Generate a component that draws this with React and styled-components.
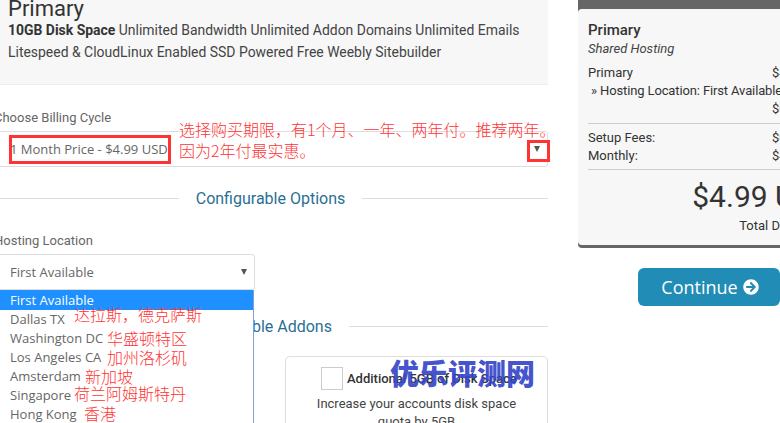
import React from 'react';
import styled, { createGlobalStyle } from 'styled-components';
import { FaArrowCircleRight } from 'react-icons/fa';

const GlobalStyle = createGlobalStyle`
  html, body {
    margin: 0;
    padding: 0;
    background: #fff;
    overflow: hidden;
  }
  * {
    box-sizing: border-box;
  }
`;

const Page = styled.div`
  position: relative;
  width: 780px;
  height: 423px;
  overflow: hidden;
  display: flex;
  align-items: flex-start;
  font-family: Roboto, "Liberation Sans", sans-serif;
  color: #333;
`;

const Main = styled.div`
  position: relative;
  flex: none;
  width: 568px;
  margin-left: -20px;
`;

const ProductHeader = styled.div`
  height: 85px;
  padding: 0 0 0 28px;
  background: #f7f7f7;
  border-bottom: 1px solid #eee;
`;

const ProductName = styled.h1`
  margin: 0;
  height: 19px;
  font-size: 22px;
  line-height: 17px;
  font-weight: 400;
  color: #333;
`;

const Features = styled.p`
  margin: 0;
  font-size: 13.95px;
  line-height: 22px;
  color: #444;

  strong {
    font-weight: 700;
    color: #333;
  }
`;

const Field = styled.div`
  padding-top: ${props => props.$top}px;
`;

const FieldLabel = styled.div`
  padding-left: 14px;
  font-size: 13px;
  line-height: 18px;
  color: #666;
  margin-bottom: 4px;
`;

const SelectBox = styled.div`
  display: flex;
  align-items: center;
  justify-content: space-between;
  width: ${props => props.$width}px;
  height: 36px;
  padding: 0 5px 0 29px;
  background: #fff;
  border: 1px solid #ddd;
  border-radius: 3px;
  font-family: "Open Sans", sans-serif;
  font-size: 13px;
  color: #666;
`;

const Caret = styled.span`
  width: 0;
  height: 0;
  margin-right: 2px;
  border-left: 3.5px solid transparent;
  border-right: 3.5px solid transparent;
  border-top: 6px solid #555;
`;

const Divider = styled.div`
  display: flex;
  align-items: center;
  gap: 17px;
  height: 24px;
  margin: ${props => props.$top}px 0 0 13px;
  font-size: 16px;
  color: #2a6f93;
  white-space: nowrap;

  &::before,
  &::after {
    content: '';
    flex: 1;
    height: 1px;
    background: #ddd;
  }
`;

const AddonRow = styled.div`
  display: flex;
  justify-content: flex-end;
  margin-top: 18px;
`;

const AddonCard = styled.div`
  width: 263px;
  height: 120px;
  padding: 10px 12px;
  border: 1px solid #ddd;
  border-radius: 5px;
  text-align: center;
`;

const AddonHead = styled.div`
  display: flex;
  align-items: center;
  gap: 4px;
  margin-left: 23px;
  font-size: 13px;
  font-weight: 500;
  white-space: nowrap;
  color: #333;
`;

const Checkbox = styled.span`
  flex: none;
  width: 22px;
  height: 23px;
  background: #fff;
  border: 1px solid #ccc;
`;

const AddonText = styled.div`
  margin-top: 5px;
  padding: 0 18px;
  font-size: 13px;
  line-height: 18px;
  color: #444;
`;

const Dropdown = styled.ul`
  position: absolute;
  left: 20px;
  top: 290px;
  width: 254px;
  height: 140px;
  margin: 0;
  padding: 0;
  list-style: none;
  background: #fff;
  border: 1px solid #7f9fd8;
  border-left: none;
  border-top: none;
  font-family: "Open Sans", sans-serif;
  font-size: 13px;
`;

const DropdownItem = styled.li`
  height: ${props => (props.$active ? 20 : 19)}px;
  padding-left: 10px;
  line-height: ${props => (props.$active ? 20 : 19)}px;
  background: ${props => (props.$active ? '#1e90ff' : '#fff')};
  color: ${props => (props.$active ? '#fff' : '#666')};
`;

const Sidebar = styled.aside`
  flex: none;
  width: 264px;
  margin-left: 30px;
`;

const SummaryFrame = styled.div`
  height: 248px;
  padding: 9px 0 3px;
  background: #666;
  border-radius: 0 0 4px 4px;
`;

const Summary = styled.div`
  height: 100%;
  padding: 11px 10px 0;
  background: #f7f7f7;
  border-radius: 4px;
  font-size: 13px;
  line-height: 18px;
  color: #333;
`;

const SummaryTitle = styled.div`
  font-size: 15px;
  font-weight: 500;
  line-height: 20px;
`;

const SummaryGroup = styled.div`
  font-style: italic;
  line-height: 18px;
  margin-bottom: 6px;
  color: #444;
`;

const SummaryRow = styled.div`
  display: flex;
  justify-content: ${props => (props.$end ? 'flex-end' : 'space-between')};
  padding-left: ${props => (props.$sub ? 3 : 0)}px;
  white-space: nowrap;
  letter-spacing: ${props => (props.$sub ? '-0.01em' : 'normal')};
`;

const SummaryAmount = styled.span`
  display: block;
  width: 60px;
`;

const SummaryRule = styled.div`
  height: 1px;
  margin: ${props => props.$top}px 0 5px;
  background: #ccc;
`;

const TotalPrice = styled.div`
  margin-top: 11px;
  font-size: 30px;
  line-height: 32px;
  text-align: right;
  color: #333;
`;

const TotalLabel = styled.div`
  margin-top: 4px;
  text-align: right;
`;

const ContinueButton = styled.button`
  display: flex;
  align-items: center;
  justify-content: center;
  gap: 5px;
  width: 142px;
  height: 38px;
  margin: 20px 0 0 60px;
  padding: 0 0 0 2px;
  background: #218cb5;
  color: #fff;
  border: none;
  border-radius: 6px;
  font-family: "Open Sans", sans-serif;
  font-size: 18px;
`;

const RedBox = styled.div`
  position: absolute;
  left: ${props => props.$x}px;
  top: ${props => props.$y}px;
  width: ${props => props.$w}px;
  height: ${props => props.$h}px;
  border: 3px solid #f33;
`;

const Note = styled.div`
  position: absolute;
  left: ${props => props.$x}px;
  top: ${props => props.$y}px;
  font-family: "Noto Sans CJK SC", sans-serif;
  font-size: 16px;
  font-weight: 300;
  line-height: 20px;
  color: #f33;
  white-space: nowrap;
`;

const Watermark = styled.div`
  position: absolute;
  left: 390px;
  top: 354px;
  font-family: "Noto Sans CJK SC", sans-serif;
  font-size: 29px;
  font-weight: 900;
  line-height: 36px;
  color: rgba(52, 68, 200, 0.92);
  white-space: nowrap;
`;

const locations = ['First Available', 'Dallas TX', 'Washington DC', 'Los Angeles CA', 'Amsterdam', 'Singapore', 'Hong Kong'];

const notes = [
  { x: 179, y: 119, text: '选择购买期限，有1个月、一年、两年付。推荐两年。' },
  { x: 179, y: 140, text: '因为2年付最实惠。' },
  { x: 74, y: 304, text: '达拉斯，德克萨斯' },
  { x: 107, y: 328, text: '华盛顿特区' },
  { x: 107, y: 347, text: '加州洛杉矶' },
  { x: 85, y: 366, text: '新加坡' },
  { x: 74, y: 383, text: '荷兰阿姆斯特丹' },
  { x: 84, y: 403, text: '香港' },
];

const App = () => {
  return (
    <Page>
      <GlobalStyle />
      <Main>
        <ProductHeader>
          <ProductName>Primary</ProductName>
          <Features>
            <strong>10GB Disk Space</strong> Unlimited Bandwidth Unlimited Addon Domains Unlimited Emails
            <br />
            Litespeed &amp; CloudLinux Enabled SSD Powered Free Weebly Sitebuilder
          </Features>
        </ProductHeader>

        <Field $top={24}>
          <FieldLabel>Choose Billing Cycle</FieldLabel>
          <SelectBox $width={568}>
            1 Month Price - $4.99 USD
            <Caret />
          </SelectBox>
        </Field>

        <Divider $top={19}>Configurable Options</Divider>

        <Field $top={22}>
          <FieldLabel>Hosting Location</FieldLabel>
          <SelectBox $width={275}>
            First Available
            <Caret />
          </SelectBox>
        </Field>

        <Divider $top={24}>Available Addons</Divider>

        <AddonRow>
          <AddonCard>
            <AddonHead>
              <Checkbox />
              Additional 5GB of Disk Space
            </AddonHead>
            <AddonText>Increase your accounts disk space quota by 5GB</AddonText>
          </AddonCard>
        </AddonRow>

        <Dropdown>
          {locations.map((name, i) => (
            <DropdownItem key={name} $active={i === 0}>
              {name}
            </DropdownItem>
          ))}
        </Dropdown>
      </Main>

      <Sidebar>
        <SummaryFrame>
          <Summary>
            <SummaryTitle>Primary</SummaryTitle>
            <SummaryGroup>Shared Hosting</SummaryGroup>
            <SummaryRow>
              Primary
              <SummaryAmount>$4.99 USD</SummaryAmount>
            </SummaryRow>
            <SummaryRow $sub>» Hosting Location: First Available</SummaryRow>
            <SummaryRow $end>
              <SummaryAmount>$0.00 USD</SummaryAmount>
            </SummaryRow>
            <SummaryRule $top={5} />
            <SummaryRow>
              Setup Fees:
              <SummaryAmount>$0.00 USD</SummaryAmount>
            </SummaryRow>
            <SummaryRow>
              Monthly:
              <SummaryAmount>$4.99 USD</SummaryAmount>
            </SummaryRow>
            <SummaryRule $top={4} />
            <TotalPrice>$4.99 USD</TotalPrice>
            <TotalLabel>Total Due Today</TotalLabel>
          </Summary>
        </SummaryFrame>
        <ContinueButton>
          Continue <FaArrowCircleRight size={16} />
        </ContinueButton>
      </Sidebar>

      <RedBox $x={9} $y={135} $w={162} $h={29} />
      <RedBox $x={527} $y={140} $w={23} $h={22} />
      {notes.map(note => (
        <Note key={note.text} $x={note.x} $y={note.y}>
          {note.text}
        </Note>
      ))}
      <Watermark>优乐评测网</Watermark>
    </Page>
  );
};

export default App;
